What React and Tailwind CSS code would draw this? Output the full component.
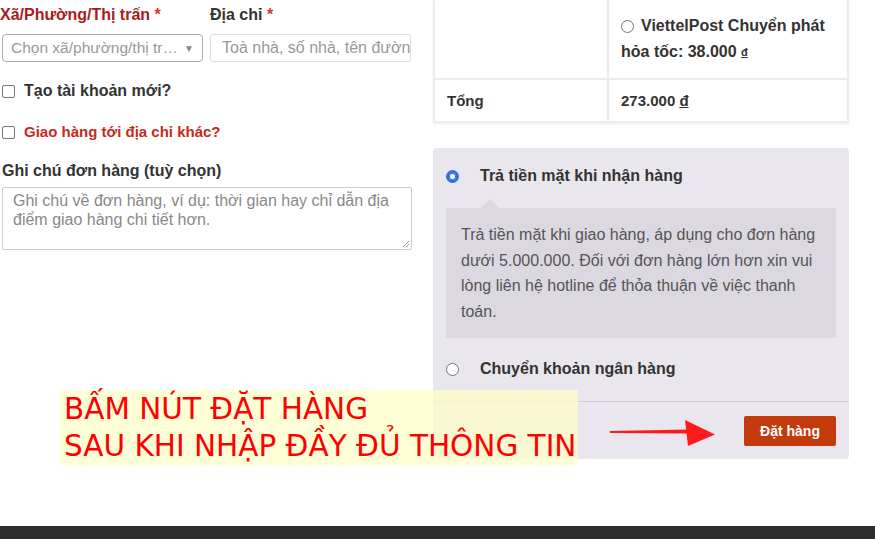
import React from 'react';

const Radio = ({ checked }) => (
  <span
    className={`inline-block w-[13px] h-[13px] rounded-full shrink-0 ${
      checked ? 'border-[3px] border-[#2f6fe4] bg-white shadow-[0_0_0_1px_#2f6fe4_inset]' : 'border border-[#767676] bg-white'
    }`}
  />
);

const Checkbox = () => (
  <span className="inline-block w-[13px] h-[13px] rounded-[2px] border border-[#767676] bg-white shrink-0" />
);

export default function App() {
  return (
    <div className="h-[539px] w-[875px] overflow-hidden bg-white flex flex-col font-['Liberation_Sans',Arial,sans-serif] text-[#333]">
      <div className="flex-1 flex relative">
        {/* Left: address + notes */}
        <div className="w-[412px] pl-[2px] pt-[5px]">
          <div className="flex gap-[7px]">
            <div className="w-[201px]">
              <div className="text-[16px] font-bold leading-[20px] text-[#a81b1b] -ml-[2px]">
                Xã/Phường/Thị trấn <span className="text-[#e2312e]">*</span>
              </div>
              <div className="mt-[9px] h-[28px] border border-[#aaa] rounded-[4px] flex items-center pl-[8px] pr-[8px] text-[15.5px] text-[#999]">
                <span className="flex-1 whitespace-nowrap">Chọn xã/phường/thị tr…</span>
                <span className="text-[10px] text-[#888]">▼</span>
              </div>
            </div>
            <div className="w-[201px]">
              <div className="text-[16px] font-bold leading-[20px] text-[#333]">
                Địa chỉ <span className="text-[#e2312e]">*</span>
              </div>
              <div className="mt-[9px] h-[28px] border border-[#ddd] rounded-[3px] flex items-center pl-[11px] text-[16px] text-[#999] overflow-hidden whitespace-nowrap">
                Toà nhà, số nhà, tên đường
              </div>
            </div>
          </div>

          <label className="mt-[19px] flex items-center gap-[9px] text-[16px] font-bold leading-[20px]">
            <Checkbox />
            Tạo tài khoản mới?
          </label>

          <label className="mt-[21px] flex items-center gap-[9px] text-[15px] font-bold leading-[20px] text-[#c62a1d]">
            <Checkbox />
            Giao hàng tới địa chỉ khác?
          </label>

          <div className="mt-[19px] text-[16px] font-bold leading-[20px]">Ghi chú đơn hàng (tuỳ chọn)</div>
          <div className="relative mt-[6px] h-[63px] border border-[#ccc] rounded-[2px] pl-[10px] pr-[8px] pt-[3px] text-[16px] leading-[19px] text-[#888]">
            Ghi chú về đơn hàng, ví dụ: thời gian hay chỉ dẫn địa điểm giao hàng chi tiết hơn.
            <svg className="absolute right-[1px] bottom-[1px]" width="8" height="8" viewBox="0 0 8 8">
              <path d="M7 1 L1 7 M7 4 L4 7" stroke="#999" strokeWidth="1" />
            </svg>
          </div>
        </div>

        {/* Right: order summary + payment */}
        <div className="ml-[21px] w-[416px]">
          <div className="border-x-2 border-b-2 border-[#ececec] shadow-[0_1px_2px_rgba(0,0,0,0.08)]">
            <div className="flex h-[80px] border-b-2 border-[#ececec]">
              <div className="w-[174px] border-r-2 border-[#ececec]" />
              <div className="flex-1 pl-[12px] pt-[13px] text-[16px] font-bold leading-[26px]">
                <div className="flex items-center gap-[7px]">
                  <Radio />
                  <span>ViettelPost Chuyển phát</span>
                </div>
                <div>
                  hỏa tốc: 38.000 <span className="text-[11px] underline align-top">đ</span>
                </div>
              </div>
            </div>
            <div className="flex h-[41px] text-[15px] font-bold">
              <div className="w-[174px] border-r-2 border-[#ececec] pl-[12px] pt-[2px] flex items-center">Tổng</div>
              <div className="flex-1 pl-[12px] pt-[2px] flex items-center">
                273.000&nbsp;<span className="underline">đ</span>
              </div>
            </div>
          </div>

          <div className="mt-[25px] h-[311px] bg-[#e9e6ed] rounded-[4px] flex flex-col">
            <div className="px-[13px] pt-[21px]">
              <div className="flex items-center h-[14px]">
                <Radio checked />
                <span className="ml-[21px] text-[16px] font-bold">Trả tiền mặt khi nhận hàng</span>
              </div>
              <div className="relative mt-[25px] bg-[#dcd8e2] h-[130px] px-[15px] pt-[14px] text-[16px] leading-[25.5px] text-[#555]">
                <span className="absolute left-[35px] -top-[9px] w-0 h-0 border-x-[9px] border-x-transparent border-b-[9px] border-b-[#dcd8e2]" />
                Trả tiền mặt khi giao hàng, áp dụng cho đơn hàng dưới 5.000.000. Đối với đơn hàng lớn hơn xin vui lòng liên hệ hotline để thỏa thuận về việc thanh toán.
              </div>
              <div className="flex items-center h-[14px] mt-[24px]">
                <Radio />
                <span className="ml-[21px] text-[16px] font-bold">Chuyển khoản ngân hàng</span>
              </div>
            </div>
            <div className="mt-[25px] border-t border-[#cfccd3]" />
            <div className="flex justify-end px-[13px] pt-[14px]">
              <button className="h-[30px] w-[92px] bg-[#c33a0c] rounded-[2px] text-white text-[14px] font-bold">
                Đặt hàng
              </button>
            </div>
          </div>
        </div>

        {/* Annotation overlay */}
        <div className="absolute left-[60px] top-[390px] w-[518px] h-[75px] bg-[rgba(255,255,200,0.72)] pl-[4px] pt-[1px] text-[#ff0000] text-[29.5px] leading-[37px] font-['DejaVu_Sans',sans-serif] whitespace-nowrap">
          <div>BẤM NÚT ĐẶT HÀNG</div>
          <div>SAU KHI NHẬP ĐẦY ĐỦ THÔNG TIN</div>
        </div>
        <svg className="absolute left-[605px] top-[415px]" width="115" height="35" viewBox="0 0 115 35">
          <path d="M5 16 L85 14.5 L85 18.5 L5 18 Z" fill="#ff1a1a" />
          <path d="M80 5 L110 19.5 L83 31 Z" fill="#ff1a1a" />
        </svg>
      </div>
      <div className="h-[13px] bg-[#2d2d2d]" />
    </div>
  );
}
